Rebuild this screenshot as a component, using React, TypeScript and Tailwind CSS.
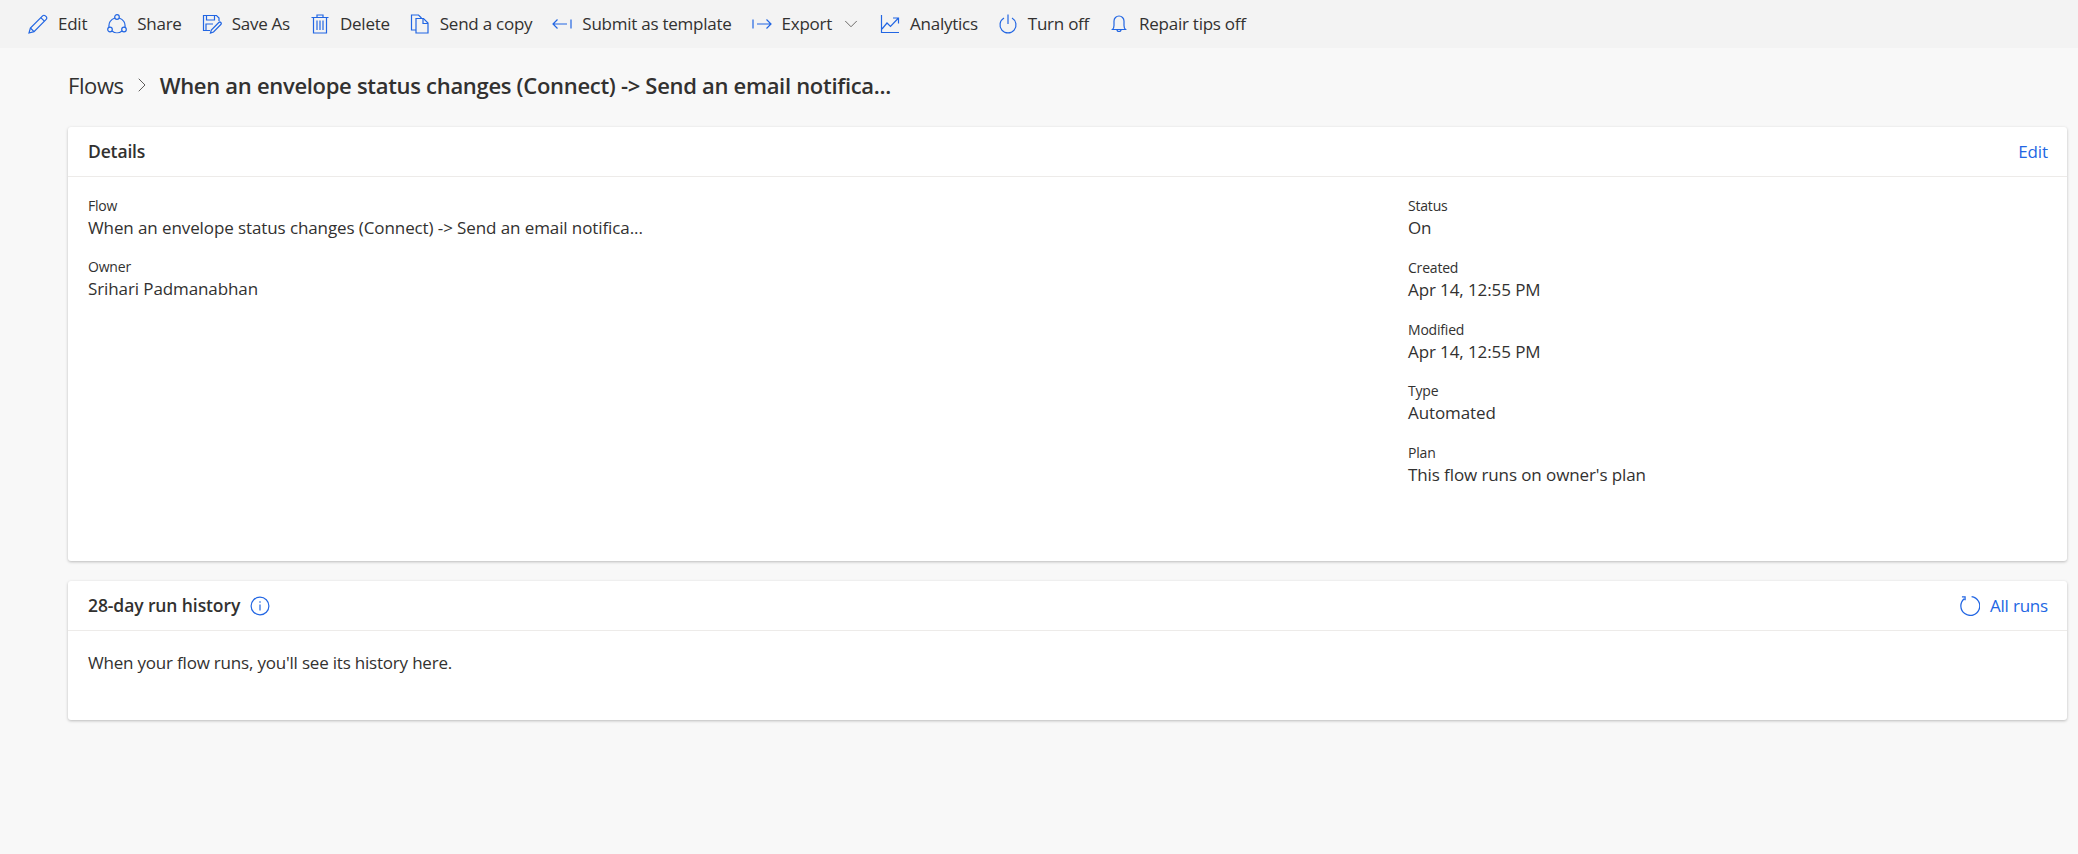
import React from 'react'
import { ChevronRight, ChevronDown } from 'lucide-react'

const blue = '#2266e3'

const EditIcon = () => (
  <svg width="20" height="20" viewBox="0 0 20 20" fill="none" stroke={blue} strokeWidth="1.2">
    <path d="M1 19l1.400-5L14.600 1.800a1.900 1.900 0 0 1 2.700 0l.9.9a1.900 1.900 0 0 1 0 2.700L6 17.600z" />
    <path d="M12.800 3.600l3.600 3.600M2.400 14l3.600 3.600" />
  </svg>
)

const ShareIcon = () => (
  <svg width="20" height="20" viewBox="0 0 20 20" fill="none" stroke={blue} strokeWidth="1.2">
    <circle cx="10" cy="3" r="2.300" />
    <circle cx="3" cy="15.500" r="2.300" />
    <circle cx="17" cy="15.500" r="2.300" />
    <path d="M7.900 4A8 8 0 0 0 2.100 13.400M12.100 4a8 8 0 0 1 5.800 9.400M5 17a8 8 0 0 0 10 0" />
  </svg>
)

const SaveAsIcon = () => (
  <svg width="20" height="20" viewBox="0 0 20 20" fill="none" stroke={blue} strokeWidth="1.2">
    <path d="M8 16.500H1.500v-15h13l2.500 2.500V7" />
    <path d="M4.500 1.500v4.500h8V1.500M4 16v-6h7" />
    <path d="M8.500 19l.8-3 7.500-7.500a1.400 1.400 0 0 1 2 2L11.500 18z" />
  </svg>
)

const DeleteIcon = () => (
  <svg width="20" height="20" viewBox="0 0 20 20" fill="none" stroke={blue} strokeWidth="1.2">
    <path d="M1.500 3.500h17M7 3.500V1h6v2.500M3.500 3.500V19h13V3.500M7 6.500V16M10 6.500V16M13 6.500V16" />
  </svg>
)

const CopyIcon = () => (
  <svg width="20" height="20" viewBox="0 0 20 20" fill="none" stroke={blue} strokeWidth="1.2">
    <path d="M6 16H1.500V1h7l3 3" />
    <path d="M6 4.500h7.500l4.500 4.500v10H6z" />
    <path d="M13 4.500V9.500h5" />
  </svg>
)

const SubmitIcon = () => (
  <svg width="20" height="20" viewBox="0 0 20 20" fill="none" stroke={blue} strokeWidth="1.2">
    <path d="M1 10h14M5.500 5.500L1 10l4.500 4.500M19 5.500v9" />
  </svg>
)

const ExportIcon = () => (
  <svg width="20" height="20" viewBox="0 0 20 20" fill="none" stroke={blue} strokeWidth="1.2">
    <path d="M1 5.500v9M5 10h14M14.500 5.500L19 10l-4.500 4.500" />
  </svg>
)

const AnalyticsIcon = () => (
  <svg width="20" height="20" viewBox="0 0 20 20" fill="none" stroke={blue} strokeWidth="1.2">
    <path d="M1.500 1v17.500H19M2 15l5-6 3.500 3.500L18 4.500M13 4h5.500v5.500" />
  </svg>
)

const PowerIcon = () => (
  <svg width="20" height="20" viewBox="0 0 20 20" fill="none" stroke={blue} strokeWidth="1.2">
    <path d="M10 0.500v9.500M6 4a8 8 0 1 0 8 0" />
  </svg>
)

const BellIcon = () => (
  <svg width="20" height="20" viewBox="0 0 20 20" fill="none" stroke={blue} strokeWidth="1.2">
    <path d="M3.500 15.500c1-1 1.500-2 1.500-4V7a5 5 0 0 1 10 0v4.500c0 2 .5 3 1.500 4z" />
    <path d="M8 15.500a2 2 0 0 0 4 0" />
  </svg>
)

const InfoIcon = () => (
  <svg width="20" height="20" viewBox="0 0 20 20" fill="none" stroke={blue} strokeWidth="1.2">
    <circle cx="10" cy="10" r="8.900" />
    <path d="M10 8.500v6M10 5.300v1.400" />
  </svg>
)

const RefreshIcon = () => (
  <svg width="21" height="21" viewBox="0 0 20 20" fill="none" stroke={blue} strokeWidth="1.2">
    <path d="M12 1.500a9 9 0 1 1-7 2M2.800 1.800h3v3.200" />
  </svg>
)

const toolbarItems = [
  { label: 'Edit', icon: <EditIcon /> },
  { label: 'Share', icon: <ShareIcon /> },
  { label: 'Save As', icon: <SaveAsIcon /> },
  { label: 'Delete', icon: <DeleteIcon /> },
  { label: 'Send a copy', icon: <CopyIcon /> },
  { label: 'Submit as template', icon: <SubmitIcon /> },
  { label: 'Export', icon: <ExportIcon />, chevron: true },
  { label: 'Analytics', icon: <AnalyticsIcon /> },
  { label: 'Turn off', icon: <PowerIcon /> },
  { label: 'Repair tips off', icon: <BellIcon /> }
]

const Field = ({ label, value }: { label: string; value: string }) => (
  <div>
    <div className="text-[14px] leading-[20px] font-medium tracking-[-0.2px]">{label}</div>
    <div className="text-[17px] leading-[23px] tracking-[-0.1px]">{value}</div>
  </div>
)

export default function App() {
  return (
    <div className="min-h-[854px] bg-[#f8f8f8] font-['Open_Sans','Liberation_Sans',sans-serif] text-[#323130]">
      <div className="h-[48px] bg-[#f3f3f3] flex items-center gap-[20px] pl-[28px]">
        {toolbarItems.map(item => (
          <div key={item.label} className="flex items-center gap-[10px]">
            {item.icon}
            <span className="text-[17px] tracking-[-0.25px]">{item.label}</span>
            {item.chevron && <ChevronDown size={22} strokeWidth={1} className="text-[#605e5c] -mx-[2px]" />}
          </div>
        ))}
      </div>

      <div className="pl-[68px] pr-[11px]">
        <div className="h-[79px] flex items-center pb-[5px]">
          <span className="text-[22px] tracking-[-0.4px]">Flows</span>
          <ChevronRight size={24} strokeWidth={1} className="ml-[6px] mr-[6px] text-[#605e5c]" />
          <span className="text-[22px] font-semibold tracking-[-0.3px]">When an envelope status changes (Connect) -&gt; Send an email notifica...</span>
        </div>

        <section className="bg-white rounded-[3px] shadow-[0_1px_3px_rgba(0,0,0,0.25)] h-[434px]">
          <header className="h-[50px] flex items-center justify-between pl-[20px] pr-[19px] border-b border-[#edebe9]">
            <h2 className="text-[17.500px] font-semibold tracking-[-0.15px]">Details</h2>
            <span className="text-[17px] tracking-[-0.1px] text-[#2266e3]">Edit</span>
          </header>
          <div className="grid grid-cols-[1320px_1fr] px-[20px] pt-[19px]">
            <div className="flex flex-col gap-[18px]">
              <Field label="Flow" value="When an envelope status changes (Connect) -> Send an email notifica..." />
              <Field label="Owner" value="Srihari Padmanabhan" />
            </div>
            <div className="flex flex-col gap-[18.750px]">
              <Field label="Status" value="On" />
              <Field label="Created" value="Apr 14, 12:55 PM" />
              <Field label="Modified" value="Apr 14, 12:55 PM" />
              <Field label="Type" value="Automated" />
              <Field label="Plan" value="This flow runs on owner's plan" />
            </div>
          </div>
        </section>

        <section className="mt-[20px] bg-white rounded-[3px] shadow-[0_1px_3px_rgba(0,0,0,0.25)] h-[139px]">
          <header className="h-[50px] flex items-center justify-between pl-[20px] pr-[19px] border-b border-[#edebe9]">
            <div className="flex items-center gap-[10px]">
              <h2 className="text-[17.500px] font-semibold tracking-[-0.1px]">28-day run history</h2>
              <InfoIcon />
            </div>
            <div className="flex items-center gap-[10px] text-[#2266e3]">
              <RefreshIcon />
              <span className="text-[17px] tracking-[-0.2px]">All runs</span>
            </div>
          </header>
          <div className="px-[20px] pt-[20px] text-[17px] leading-[23px] tracking-[-0.2px]">When your flow runs, you'll see its history here.</div>
        </section>
      </div>
    </div>
  )
}
